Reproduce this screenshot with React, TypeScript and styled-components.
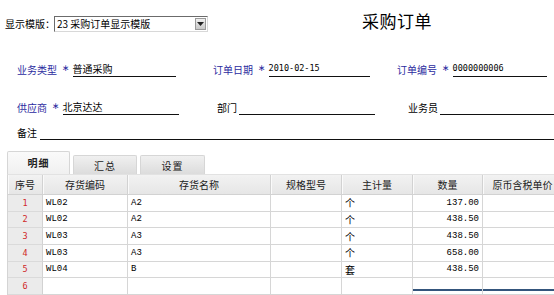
import React from "react";
import styled, { createGlobalStyle } from "styled-components";

const GlobalStyle = createGlobalStyle`
  html, body { margin: 0; padding: 0; background: #fff; overflow: hidden; }
  body {
    font-family: "Noto Sans CJK SC", "Liberation Sans", sans-serif;
    font-size: 10px;
    color: #000;
  }
`;

const Page = styled.div`
  width: 554px;
  height: 295px;
  overflow: hidden;
  display: flex;
  flex-direction: column;
`;

const TopBar = styled.div`
  height: 64px;
  display: flex;
  align-items: flex-start;
  padding-left: 5px;
`;

const TemplateLabel = styled.span`
  margin-top: 17px;
  line-height: 14px;
  width: 49px;
  flex: none;
  white-space: nowrap;
`;

const Select = styled.div`
  margin-top: 16px;
  width: 152px;
  height: 14px;
  flex: none;
  border: 1px solid #6b6b6b;
  border-right-color: #d8d8d8;
  border-bottom-color: #d8d8d8;
  display: flex;
  align-items: center;
  background: #fff;
`;

const SelectText = styled.span`
  flex: 1;
  padding-left: 2px;
  line-height: 14px;
  white-space: nowrap;
`;

const SelectButton = styled.div`
  width: 11px;
  height: 12px;
  margin-right: 1px;
  background: linear-gradient(#f0f0f0, #c8c8c8);
  border: 1px solid #9a9a9a;
  box-sizing: border-box;
  display: flex;
  align-items: center;
  justify-content: center;
`;

const Title = styled.h1`
  margin: 11px 0 0 154px;
  font-size: 17px;
  font-weight: normal;
  line-height: 20px;
  letter-spacing: 0.5px;
  white-space: nowrap;
`;

const FieldRow = styled.div<{ $gap: number }>`
  height: 16px;
  margin-top: ${(p) => p.$gap}px;
  display: flex;
  align-items: flex-end;
`;

const Field = styled.div<{ $left: number; $width: number }>`
  margin-left: ${(p) => p.$left}px;
  width: ${(p) => p.$width}px;
  display: flex;
  align-items: flex-end;
  flex: none;
`;

const Label = styled.span<{ $required?: boolean }>`
  color: ${(p) => (p.$required ? "#2b2ba0" : "#000")};
  line-height: 13px;
  white-space: nowrap;
  padding-bottom: 1px;
`;

const Star = styled.span`
  color: #2b2ba0;
  font-family: "DejaVu Sans", sans-serif;
  font-size: 9px;
  line-height: 13px;
  padding: 0 3px 2px 5px;
`;

const Value = styled.span<{ $mono?: boolean; $pad?: number }>`
  flex: 1;
  margin-left: ${(p) => p.$pad ?? 0}px;
  border-bottom: 1px solid #111;
  line-height: 13px;
  height: 14px;
  white-space: nowrap;
  font-family: ${(p) =>
    p.$mono ? '"DejaVu Sans Mono", monospace' : '"Noto Sans CJK SC", sans-serif'};
  font-size: ${(p) => (p.$mono ? "8.5px" : "10px")};
`;

const TabBar = styled.div`
  margin-top: 11px;
  height: 23px;
  display: flex;
  align-items: flex-end;
  padding-left: 7px;
  gap: 3px;
`;

const Tab = styled.div<{ $active?: boolean; $width: number }>`
  width: ${(p) => p.$width}px;
  height: ${(p) => (p.$active ? 23 : 19)}px;
  box-sizing: border-box;
  border: 1px solid #d6d6d6;
  border-bottom: none;
  border-radius: 2px 2px 0 0;
  background: ${(p) =>
    p.$active
      ? "linear-gradient(#fafafa, #f0f0f0)"
      : "linear-gradient(#f0f0f0, #dcdcdc)"};
  font-weight: ${(p) => (p.$active ? "bold" : "normal")};
  color: #222;
  display: flex;
  align-items: center;
  justify-content: center;
  padding-top: ${(p) => (p.$active ? 0 : 1)}px;
  letter-spacing: 1px;
`;

const Grid = styled.div`
  margin-left: 7px;
  display: grid;
  grid-template-columns: 35px 85px 143px 71px 71px 70px 80px;
  grid-template-rows: 20px repeat(6, 16.7px);
  border-left: 1px solid #d4d4d4;
  border-top: 1px solid #e2e2e2;
  width: max-content;
`;

const HeadCell = styled.div`
  background: linear-gradient(#f2f2f2, #e6e6e6);
  border-right: 1px solid #d2d2d2;
  border-bottom: 1px solid #d2d2d2;
  box-shadow: inset 1px 0 0 #fafafa;
  display: flex;
  align-items: center;
  justify-content: center;
  color: #222;
  white-space: nowrap;
  overflow: hidden;
`;

const NumCell = styled.div`
  background: #ebebeb;
  border-right: 1px solid #d2d2d2;
  border-bottom: 1px solid #dadada;
  color: #d02828;
  font-family: "DejaVu Sans Mono", monospace;
  font-size: 8.5px;
  display: flex;
  align-items: center;
  justify-content: center;
`;

const Cell = styled.div<{ $align?: "left" | "right"; $mono?: boolean; $focus?: boolean }>`
  position: relative;
  background: #fff;
  border-right: 1px solid #d6d6d6;
  border-bottom: 1px solid #d6d6d6;
  display: flex;
  align-items: center;
  justify-content: ${(p) => (p.$align === "right" ? "flex-end" : "flex-start")};
  padding: 0 3px 0 3px;
  font-family: ${(p) =>
    p.$mono ? '"Liberation Mono", monospace' : '"Noto Sans CJK SC", sans-serif'};
  font-size: ${(p) => (p.$mono ? "9px" : "10px")};
  white-space: nowrap;
  overflow: hidden;
  &::after {
    content: "";
    display: ${(p) => (p.$focus ? "block" : "none")};
    position: absolute;
    left: 0;
    right: 0;
    bottom: 3px;
    height: 2px;
    background: #34557c;
  }
`;

const headers = ["序号", "存货编码", "存货名称", "规格型号", "主计量", "数量", "原币含税单价"];

const rows = [
  { code: "WL02", name: "A2", unit: "个", qty: "137.00" },
  { code: "WL02", name: "A2", unit: "个", qty: "438.50" },
  { code: "WL03", name: "A3", unit: "个", qty: "438.50" },
  { code: "WL03", name: "A3", unit: "个", qty: "658.00" },
  { code: "WL04", name: "B", unit: "套", qty: "438.50" },
  { code: "", name: "", unit: "", qty: "" },
];

export default function App() {
  return (
    <Page>
      <GlobalStyle />
      <TopBar>
        <TemplateLabel>显示模版：</TemplateLabel>
        <Select>
          <SelectText>23 采购订单显示模版</SelectText>
          <SelectButton>
            <svg width="7" height="4" viewBox="0 0 7 4">
              <path d="M0 0h7L3.5 4z" fill="#222" />
            </svg>
          </SelectButton>
        </Select>
        <Title>采购订单</Title>
      </TopBar>

      <FieldRow $gap={0}>
        <Field $left={17} $width={159}>
          <Label $required>业务类型</Label>
          <Star>∗</Star>
          <Value>普通采购</Value>
        </Field>
        <Field $left={37} $width={157}>
          <Label $required>订单日期</Label>
          <Star>∗</Star>
          <Value $mono>2010-02-15</Value>
        </Field>
        <Field $left={27} $width={150}>
          <Label $required>订单编号</Label>
          <Star>∗</Star>
          <Value $mono>0000000006</Value>
        </Field>
      </FieldRow>

      <FieldRow $gap={23}>
        <Field $left={17} $width={162}>
          <Label $required>供应商</Label>
          <Star>∗</Star>
          <Value>北京达达</Value>
        </Field>
        <Field $left={38} $width={158}>
          <Label>部门</Label>
          <Value $pad={2} />
        </Field>
        <Field $left={33} $width={146}>
          <Label>业务员</Label>
          <Value $pad={2} />
        </Field>
      </FieldRow>

      <FieldRow $gap={9}>
        <Field $left={17} $width={537}>
          <Label>备注</Label>
          <Value $pad={3} />
        </Field>
      </FieldRow>

      <TabBar>
        <Tab $active $width={63}>明细</Tab>
        <Tab $width={64}>汇总</Tab>
        <Tab $width={65}>设置</Tab>
      </TabBar>

      <Grid>
        {headers.map((h) => (
          <HeadCell key={h}>{h}</HeadCell>
        ))}
        {rows.map((r, i) => (
          <React.Fragment key={i}>
            <NumCell>{i + 1}</NumCell>
            <Cell $mono>{r.code}</Cell>
            <Cell $mono>{r.name}</Cell>
            <Cell />
            <Cell>{r.unit}</Cell>
            <Cell $align="right" $mono $focus={i === 5}>{r.qty}</Cell>
            <Cell $focus={i === 5} />
          </React.Fragment>
        ))}
      </Grid>
    </Page>
  );
}
